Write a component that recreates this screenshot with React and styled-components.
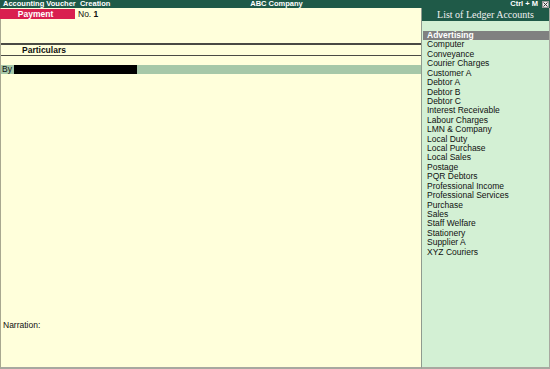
import React from "react";
import styled, { createGlobalStyle } from "styled-components";

const Global = createGlobalStyle`
  html, body { margin: 0; padding: 0; background: #ffffdb; }
  body { font-family: "Liberation Sans", Arial, sans-serif; }
`;

const Screen = styled.div`
  width: 550px;
  height: 369px;
  display: flex;
  flex-direction: column;
  overflow: hidden;
  font-family: "Liberation Sans", Arial, sans-serif;
`;

const TitleBar = styled.div`
  height: 8px;
  background: #1f5a48;
  color: #ffffff;
  font-size: 7.5px;
  font-weight: bold;
  line-height: 8px;
  display: grid;
  grid-template-columns: 1fr auto 1fr;
  align-items: center;
  padding-left: 3px;
`;

const TitleRight = styled.div`
  display: flex;
  justify-content: flex-end;
  align-items: center;
  gap: 4px;
`;

const CloseBox = styled.span`
  width: 7px;
  height: 7px;
  background: #e8e8e8;
  border: 1px solid #9a9a9a;
  box-sizing: border-box;
  display: flex;
  align-items: center;
  justify-content: center;
  margin-right: 1px;
`;

const Body = styled.div`
  flex: 1;
  display: flex;
  min-height: 0;
`;

const LeftPanel = styled.div`
  flex: 1;
  background: #ffffdb;
  border-left: 1px solid #a8a890;
  border-bottom: 2px solid #a8a8a0;
  display: flex;
  flex-direction: column;
  font-size: 8.5px;
  color: #101010;
`;

const VoucherRow = styled.div`
  display: flex;
  align-items: center;
  margin-top: 1px;
  height: 10px;
  margin-left: -1px;
`;

const TypeBadge = styled.div`
  width: 75px;
  height: 10px;
  background: #d91f4f;
  color: #fff;
  font-weight: bold;
  font-size: 8.5px;
  line-height: 10px;
  text-align: center;
  box-sizing: border-box;
  padding-right: 4px;
`;

const VoucherNo = styled.span`
  margin-left: 3px;
  b { font-weight: bold; }
`;

const ColumnHeader = styled.div`
  margin-top: 24px;
  border-top: 2px solid #4a4a44;
  border-bottom: 1px solid #4a4a44;
  height: 10px;
  line-height: 10px;
  padding-left: 21px;
  font-weight: bold;
`;

const EntryRow = styled.div`
  margin-top: 9px;
  height: 9px;
  background: #a6c8a8;
  display: flex;
  align-items: center;
  line-height: 9px;
`;

const EntryLabel = styled.span`
  width: 13px;
  padding-left: 1px;
  box-sizing: border-box;
`;

const EntryInput = styled.span`
  width: 123px;
  height: 9px;
  background: #000;
`;

const Spacer = styled.div`
  flex: 1;
`;

const Narration = styled.div`
  padding-left: 2px;
  margin-bottom: 37px;
  line-height: 10px;
`;

const RightPanel = styled.div`
  width: 127px;
  background: #d3f0d4;
  border-left: 1px solid #8f9a8f;
  border-right: 1px solid #a8a8a0;
  border-bottom: 2px solid #a8a8a0;
  display: flex;
  flex-direction: column;
`;

const PanelTitle = styled.div`
  height: 13px;
  background: #1f5a48;
  color: #f0f0f0;
  font-family: "Liberation Serif", "Times New Roman", serif;
  font-size: 10px;
  line-height: 13px;
  text-align: center;
`;

const List = styled.div`
  margin-top: 10px;
  display: flex;
  flex-direction: column;
  font-size: 8.5px;
  color: #101010;
`;

const Item = styled.div`
  height: 9.43px;
  line-height: 9.43px;
  padding-left: 4px;
  margin-left: 1px;
  background: ${(p) => (p.$active ? "#808080" : "transparent")};
  color: ${(p) => (p.$active ? "#ffffff" : "#101010")};
  font-weight: ${(p) => (p.$active ? "bold" : "normal")};
  white-space: nowrap;
`;

const ledgers = [
  "Advertising",
  "Computer",
  "Conveyance",
  "Courier Charges",
  "Customer A",
  "Debtor A",
  "Debtor B",
  "Debtor C",
  "Interest Receivable",
  "Labour Charges",
  "LMN & Company",
  "Local Duty",
  "Local Purchase",
  "Local Sales",
  "Postage",
  "PQR Debtors",
  "Professional Income",
  "Professional Services",
  "Purchase",
  "Sales",
  "Staff Welfare",
  "Stationery",
  "Supplier A",
  "XYZ Couriers",
];

export default function App() {
  return (
    <>
      <Global />
      <Screen>
        <TitleBar>
          <span>Accounting Voucher&nbsp; Creation</span>
          <span>ABC Company</span>
          <TitleRight>
            <span>Ctrl + M</span>
            <CloseBox>
              <svg width="5" height="5" viewBox="0 0 5 5">
                <path d="M0.5 0.5 L4.5 4.5 M4.5 0.5 L0.5 4.5" stroke="#333" strokeWidth="1" />
              </svg>
            </CloseBox>
          </TitleRight>
        </TitleBar>
        <Body>
          <LeftPanel>
            <VoucherRow>
              <TypeBadge>Payment</TypeBadge>
              <VoucherNo>
                No. <b>1</b>
              </VoucherNo>
            </VoucherRow>
            <ColumnHeader>Particulars</ColumnHeader>
            <EntryRow>
              <EntryLabel>By</EntryLabel>
              <EntryInput />
            </EntryRow>
            <Spacer />
            <Narration>Narration:</Narration>
          </LeftPanel>
          <RightPanel>
            <PanelTitle>List of Ledger Accounts</PanelTitle>
            <List>
              {ledgers.map((l, i) => (
                <Item key={l} $active={i === 0}>
                  {l}
                </Item>
              ))}
            </List>
          </RightPanel>
        </Body>
      </Screen>
    </>
  );
}
